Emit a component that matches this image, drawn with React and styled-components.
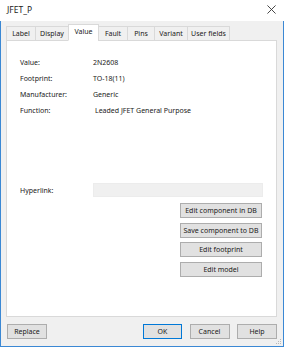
import styled, { createGlobalStyle } from "styled-components";

const GlobalStyle = createGlobalStyle`
  html, body {
    margin: 0;
    padding: 0;
    background: #f0f0f0;
  }
  * { box-sizing: border-box; }
`;

const tabs = ["Label", "Display", "Value", "Fault", "Pins", "Variant", "User fields"];
const tabWidths = [30, 34, 31, 30, 28, 34, 43];

const fields = [
  { label: "Value:", value: "2N2608" },
  { label: "Footprint:", value: "TO-18(11)" },
  { label: "Manufacturer:", value: "Generic" },
  { label: "Function:", value: "Leaded JFET General Purpose", shift: 2 },
];

const sideButtons = ["Edit component in DB", "Save component to DB", "Edit footprint", "Edit model"];

function App() {
  return (
    <>
      <GlobalStyle />
      <Window>
        <TitleBar>
          <span>JFET_P</span>
          <CloseIcon viewBox="0 0 10 10">
            <path d="M0.5 0.5 L9.5 9.5 M9.5 0.5 L0.5 9.5" />
          </CloseIcon>
        </TitleBar>
        <Body>
          <TabStrip>
            {tabs.map((t, i) => (
              <Tab key={t} $active={t === "Value"} $w={tabWidths[i]}>
                {t}
              </Tab>
            ))}
          </TabStrip>
          <Panel>
            <FieldGrid>
              {fields.map((f) => (
                <Row key={f.label}>
                  <Label>{f.label}</Label>
                  <Value $shift={f.shift}>{f.value}</Value>
                </Row>
              ))}
            </FieldGrid>
            <Row $link>
              <Label>Hyperlink:</Label>
              <LinkField />
            </Row>
            <SideButtons>
              {sideButtons.map((b) => (
                <Button key={b} $w={82}>
                  {b}
                </Button>
              ))}
            </SideButtons>
          </Panel>
          <Footer>
            <Button $w={40}>Replace</Button>
            <Spacer />
            <Button $w={39} $default>OK</Button>
            <Button $w={40}>Cancel</Button>
            <Button $w={40}>Help</Button>
          </Footer>
          <Grip viewBox="0 0 6 6">
            <rect x="4" y="0" width="1" height="1" />
            <rect x="2" y="2" width="1" height="1" />
            <rect x="4" y="2" width="1" height="1" />
            <rect x="0" y="4" width="1" height="1" />
            <rect x="2" y="4" width="1" height="1" />
            <rect x="4" y="4" width="1" height="1" />
          </Grip>
        </Body>
      </Window>
    </>
  );
}

export default App;

const Window = styled.div`
  width: 284px;
  height: 347px;
  display: flex;
  flex-direction: column;
  font-family: "Noto Sans", "Liberation Sans", sans-serif;
  font-size: 7px;
  color: #1a1a1a;
`;

const TitleBar = styled.div`
  height: 21px;
  flex: none;
  background: #fff;
  display: flex;
  align-items: center;
  justify-content: space-between;
  padding: 0 7px 2px 7px;
  font-size: 8.5px;
  color: #222;
`;

const CloseIcon = styled.svg`
  width: 9px;
  height: 9px;
  margin-right: 1px;
  stroke: #333;
  stroke-width: 1;
  fill: none;
`;

const Body = styled.div`
  position: relative;
  flex: 1;
  display: flex;
  flex-direction: column;
  padding: 4px 6px 0 5px;
  border-left: 1px solid #3b88d4;
  border-right: 1px solid #3b88d4;
  border-bottom: 1px solid #3b88d4;
`;

const TabStrip = styled.div`
  display: flex;
  align-items: flex-end;
  height: 16px;
  position: relative;
  z-index: 1;
  margin-bottom: -1px;
`;

const Tab = styled.div`
  width: ${(p) => p.$w}px;
  height: ${(p) => (p.$active ? 17 : 15)}px;
  display: flex;
  align-items: center;
  justify-content: center;
  padding-bottom: ${(p) => (p.$active ? 2 : 0)}px;
  background: ${(p) => (p.$active ? "#fff" : "#f0f0f0")};
  border: 1px solid #d9d9d9;
  border-bottom: ${(p) => (p.$active ? "1px solid #fff" : "1px solid #d9d9d9")};
  margin-left: -1px;
  &:first-child { margin-left: 0; }
`;

const Panel = styled.div`
  height: 277px;
  background: #fff;
  border: 1px solid #d9d9d9;
  padding: 13px 13px 0 13px;
  display: flex;
  flex-direction: column;
`;

const FieldGrid = styled.div`
  display: flex;
  flex-direction: column;
`;

const Row = styled.div`
  display: flex;
  align-items: center;
  height: 16px;
  margin-top: ${(p) => (p.$link ? 64 : 0)}px;
`;

const Label = styled.div`
  width: 73px;
  flex: none;
`;

const Value = styled.div`
  padding-left: ${(p) => p.$shift || 0}px;
`;

const LinkField = styled.div`
  width: 171px;
  height: 14px;
  background: #f0f0f0;
  border: 1px solid #ececec;
`;

const SideButtons = styled.div`
  display: flex;
  flex-direction: column;
  align-items: flex-end;
  gap: 4.6px;
  margin-top: 5px;
  padding-right: 1px;
`;

const Button = styled.div`
  width: ${(p) => p.$w}px;
  height: 15px;
  flex: none;
  display: flex;
  align-items: center;
  justify-content: center;
  background: #e1e1e1;
  border: 1px solid ${(p) => (p.$default ? "#0078d7" : "#adadad")};
  white-space: nowrap;
`;

const Footer = styled.div`
  display: flex;
  align-items: center;
  gap: 7.5px;
  margin-top: 7px;
  padding-left: 1px;
`;

const Spacer = styled.div`
  flex: 1;
`;

const Grip = styled.svg`
  position: absolute;
  right: 1px;
  bottom: 1px;
  width: 6px;
  height: 6px;
  fill: #b8b8b8;
`;
